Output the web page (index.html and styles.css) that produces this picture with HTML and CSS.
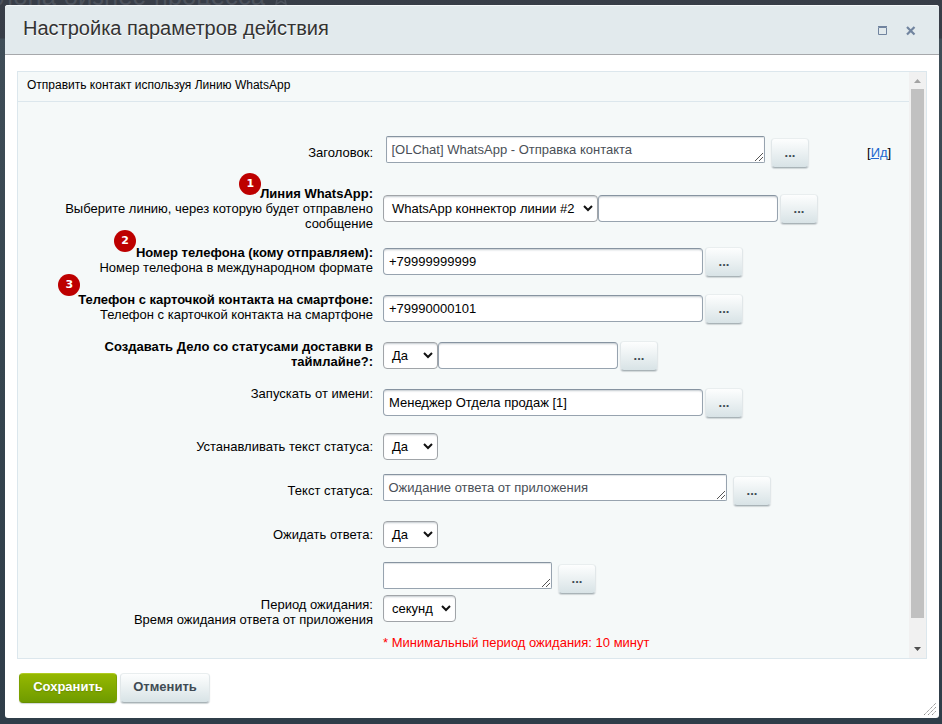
FILE: index.html
```html
<!DOCTYPE html>
<html lang="ru">
<head>
<meta charset="utf-8">
<title>Настройка параметров действия</title>
<link rel="stylesheet" href="styles.css">
</head>
<body>
<div class="backdrop-title">лона бизнес-процесса <svg width="18" height="18" viewBox="0 0 18 18"><path d="M9 1l2.400 5.200 5.600.6-4.200 3.800 1.200 5.600L9 13.400 4 16.200l1.200-5.600L1 6.800l5.600-.6z" fill="none" stroke="#4d535d" stroke-width="1.500"/></svg></div>
<main class="dialog">
  <header class="dialog-head">
    <h1><span>Настройка параметров действия</span></h1>
    <svg class="head-icons" width="40" height="12" viewBox="0 0 40 12">
      <path d="M1.500 2.500h8v7h-8zM1 1.500h9" fill="none" stroke="#71849f"/>
      <path d="M30 2l7.500 7.500M37.500 2L30 9.500" stroke="#71849f" stroke-width="2.200"/>
    </svg>
  </header>
  <section class="panel">
    <div class="form">
      <h2><span>Отправить контакт используя Линию WhatsApp</span></h2>
      <div class="row r1">
        <div class="label"><span>Заголовок:</span></div>
        <div class="field area w379"><span>[OLChat] WhatsApp - Отправка контакта</span><svg class="grip" width="8" height="8"><path d="M0 8L8 0M4 8L8 4" stroke="#555"/></svg></div>
        <button class="more low">...</button>
        <div class="id">[<a>Ид</a>]</div>
      </div>
      <div class="row r2">
        <div class="label"><b>Линия WhatsApp:<i class="badge b1">1</i></b><span>Выберите линию, через которую будет отправлено сообщение</span></div>
        <div class="field select w215"><span>WhatsApp коннектор линии #2</span><svg width="10" height="7"><path d="M1 1l4 4 4-4" fill="none" stroke="#111" stroke-width="2"/></svg></div>
        <div class="field w180"></div>
        <button class="more">...</button>
      </div>
      <div class="row r3">
        <div class="label"><b>Номер телефона (кому отправляем):<i class="badge b2">2</i></b><span>Номер телефона в международном формате</span></div>
        <div class="field w320"><span>+79999999999</span></div>
        <button class="more">...</button>
      </div>
      <div class="row r4">
        <div class="label"><b>Телефон с карточкой контакта на смартфоне:<i class="badge b3">3</i></b><span>Телефон с карточкой контакта на смартфоне</span></div>
        <div class="field w320"><span>+79990000101</span></div>
        <button class="more">...</button>
      </div>
      <div class="row r5">
        <div class="label"><b>Создавать Дело со статусами доставки в таймлайне?:</b></div>
        <div class="field select w55"><span>Да</span><svg width="10" height="7"><path d="M1 1l4 4 4-4" fill="none" stroke="#111" stroke-width="2"/></svg></div>
        <div class="field w180"></div>
        <button class="more">...</button>
      </div>
      <div class="row r6">
        <div class="label"><span>Запускать от имени:</span></div>
        <div class="field w320"><span>Менеджер Отдела продаж [1]</span></div>
        <button class="more">...</button>
      </div>
      <div class="row r7">
        <div class="label"><span>Устанавливать текст статуса:</span></div>
        <div class="field select w55"><span>Да</span><svg width="10" height="7"><path d="M1 1l4 4 4-4" fill="none" stroke="#111" stroke-width="2"/></svg></div>
      </div>
      <div class="row r8">
        <div class="label"><span>Текст статуса:</span></div>
        <div class="field area w344"><span>Ожидание ответа от приложения</span><svg class="grip" width="8" height="8"><path d="M0 8L8 0M4 8L8 4" stroke="#555"/></svg></div>
        <button class="more low">...</button>
      </div>
      <div class="row r9">
        <div class="label"><span>Ожидать ответа:</span></div>
        <div class="field select w55"><span>Да</span><svg width="10" height="7"><path d="M1 1l4 4 4-4" fill="none" stroke="#111" stroke-width="2"/></svg></div>
      </div>
      <div class="row r10">
        <div class="label"><span>Период ожидания:</span><span>Время ожидания ответа от приложения</span></div>
        <div class="period">
          <div class="line">
            <div class="field area w169"><svg class="grip" width="8" height="8"><path d="M0 8L8 0M4 8L8 4" stroke="#555"/></svg></div>
            <button class="more low">...</button>
          </div>
          <div class="field select w73"><span>секунд</span><svg width="10" height="7"><path d="M1 1l4 4 4-4" fill="none" stroke="#111" stroke-width="2"/></svg></div>
          <div class="note"><span>* Минимальный период ожидания: 10 минут</span></div>
        </div>
      </div>
    </div>
    <div class="scrollbar">
      <svg width="7" height="4"><path d="M0 4L3.5 0 7 4z" fill="#a3a3a3"/></svg>
      <div class="thumb"></div>
      <svg width="7" height="4"><path d="M0 0L3.5 4 7 0z" fill="#505050"/></svg>
    </div>
  </section>
  <footer class="actions">
    <button class="btn save"><span>Сохранить</span></button>
    <button class="btn cancel"><span>Отменить</span></button>
    <svg class="resize" width="12" height="12"><path d="M0 12L12 0M4 12l8-8M8 12l4-4" stroke="#8f8f8f" stroke-dasharray="1.4 .6"/></svg>
  </footer>
</main>
</body>
</html>
```
FILE: styles.css
```css
* { box-sizing: border-box; }
body {
  margin: 0;
  width: 942px;
  height: 724px;
  padding: 5px 3px 6px 5px;
  overflow: hidden;
  position: relative;
  background: linear-gradient(#383e48 0, #363c46 38px, #3f4d57 39px, #36454f 50%, #2f3d49 100%);
  font: 13px/15px "Liberation Sans", Arial, sans-serif;
  color: #000;
}
.backdrop-title {
  position: absolute;
  left: -2px;
  top: -19px;
  font-size: 25.7px;
  line-height: 30px;
  white-space: nowrap;
  color: #4d535d;
}
.backdrop-title svg { vertical-align: -1px; }
.dialog {
  position: relative;
  height: 713px;
  background: #fff;
  border-radius: 3px;
  display: flex;
  flex-direction: column;
}
.dialog-head {
  height: 50px;
  display: flex;
  justify-content: space-between;
  padding: 0 23px 0 18px;
  background: #e2eaed;
  border-top: 1px solid #f4f8f9;
  border-bottom: 1px solid #a6a8ab;
  border-radius: 3px 3px 0 0;
}
h1 {
  margin: 0;
  padding-top: 10px;
  font-size: 20px;
  line-height: 24px;
  font-weight: 400;
  color: #333;
  text-shadow: 0 1px 0 #fff;
}
.head-icons { margin-top: 19px; margin-right: -1px; }
.panel {
  margin: 16px 12px 0;
  height: 588px;
  display: flex;
  background: #f5f9f9;
  border: 1px solid #dce7ed;
}
.form { flex: 1; }
h2 {
  margin: 0;
  height: 30px;
  padding: 6px 0 0 9px;
  font-size: 12px;
  line-height: 15px;
  font-weight: 400;
  border-bottom: 1px solid #dce7ed;
}
.row { display: flex; align-items: flex-start; height: 27px; }
.label {
  width: 355px;
  margin-right: 10px;
  padding-left: 30px;
  flex: none;
  display: flex;
  flex-direction: column;
  align-items: flex-end;
  text-align: right;
}
.label b { position: relative; }
.r1 { margin-top: 34px; }
.r1 .label { margin-top: 9px; margin-right: 13px; }
.r2 { margin-top: 32px; }
.r2 .label { margin-top: -9px; }
.r3 { margin-top: 26px; }
.r3 .label, .r4 .label, .r5 .label, .r6 .label { margin-top: -3px; }
.r4, .r5, .r6 { margin-top: 20px; }
.r7 { margin-top: 17px; }
.r7 .label, .r9 .label { margin-top: 6px; }
.r8 { margin-top: 14px; }
.r8 .label { margin-top: 9px; }
.r9 { margin-top: 20px; }
.r10 { margin-top: 14px; }
.r10 .label { margin-top: 35px; }
.badge {
  position: absolute;
  right: calc(100% - 1px);
  width: 22px;
  height: 22px;
  border-radius: 50%;
  background: #bd0000;
  color: #fff;
  font: bold 11px/22px "DejaVu Sans", sans-serif;
  text-align: center;
}
.b1 { top: -13px; }
.b2 { top: -15px; right: 100%; }
.b3 { top: -18px; right: calc(100% - 2px); }
.field {
  flex: none;
  position: relative;
  height: 27px;
  padding: 0 5px;
  display: flex;
  align-items: center;
  background: #fff;
  border: 1px solid #97a3af;
  border-top-color: #8794a1;
  border-radius: 4px;
  box-shadow: inset 0 2px 2px -1px #c3c9ce;
  white-space: nowrap;
}
.select { padding: 0 4px 0 8px; justify-content: space-between; border-color: #a0a4a8; }
.area { border-radius: 2px; padding: 0 4.500px 1px; color: #4a4f57; box-shadow: inset 0 1px 1px #dde1e4; }
.grip { position: absolute; right: 1px; bottom: 1px; }
.w379 { width: 379px; }
.w344 { width: 344px; }
.w320 { width: 320px; }
.w215 { width: 215px; }
.w180 { width: 180px; }
.w169 { width: 169px; }
.w73 { width: 73px; }
.w55 { width: 55px; }
.more, .btn {
  border: 1px solid #e1e7e9;
  border-top-color: #e9eeef;
  border-bottom-color: #a9b3b7;
  border-radius: 4px;
  background: linear-gradient(#fdfefe, #d8e3e6);
  box-shadow: 0 1px 1px #d0d6d8;
  font: bold 13px/15px "Liberation Sans", Arial, sans-serif;
  color: #3f4b54;
}
.more { width: 38px; height: 30px; margin: -1px 0 0 2px; padding: 0 0 2px; flex: none; }
.low { margin: 2px 0 0 6px; }
.id { margin: 9px 0 0 58px; font-size: 13px; }
.id a { color: #2067d0; text-decoration: underline; }
.line { display: flex; height: 33px; }
.note { margin-top: 13px; color: #f00; white-space: nowrap; }
.scrollbar {
  width: 17px;
  background: #f1f1f1;
  display: flex;
  flex-direction: column;
  align-items: center;
  padding: 7px 0 7px;
}
.thumb { width: 13px; height: 529px; margin: 6px 0 auto; background: #c1c1c1; }
.actions { position: relative; display: flex; gap: 4px; padding: 14px 0 0 14px; flex: 1; align-items: flex-start; }
.btn { height: 30px; padding: 0 0 3px; font-size: 13px; }
.save {
  width: 98px;
  color: #fff;
  background: linear-gradient(#95b800, #6f9b00);
  border-color: #7fa300 #7ba000 #678e00;
  border-top-color: #b0cc20;
  text-shadow: 0 1px 1px #55760080;
}
.cancel { width: 90px; margin-left: -1px; }
.resize { position: absolute; right: 3px; bottom: 3px; }
```
